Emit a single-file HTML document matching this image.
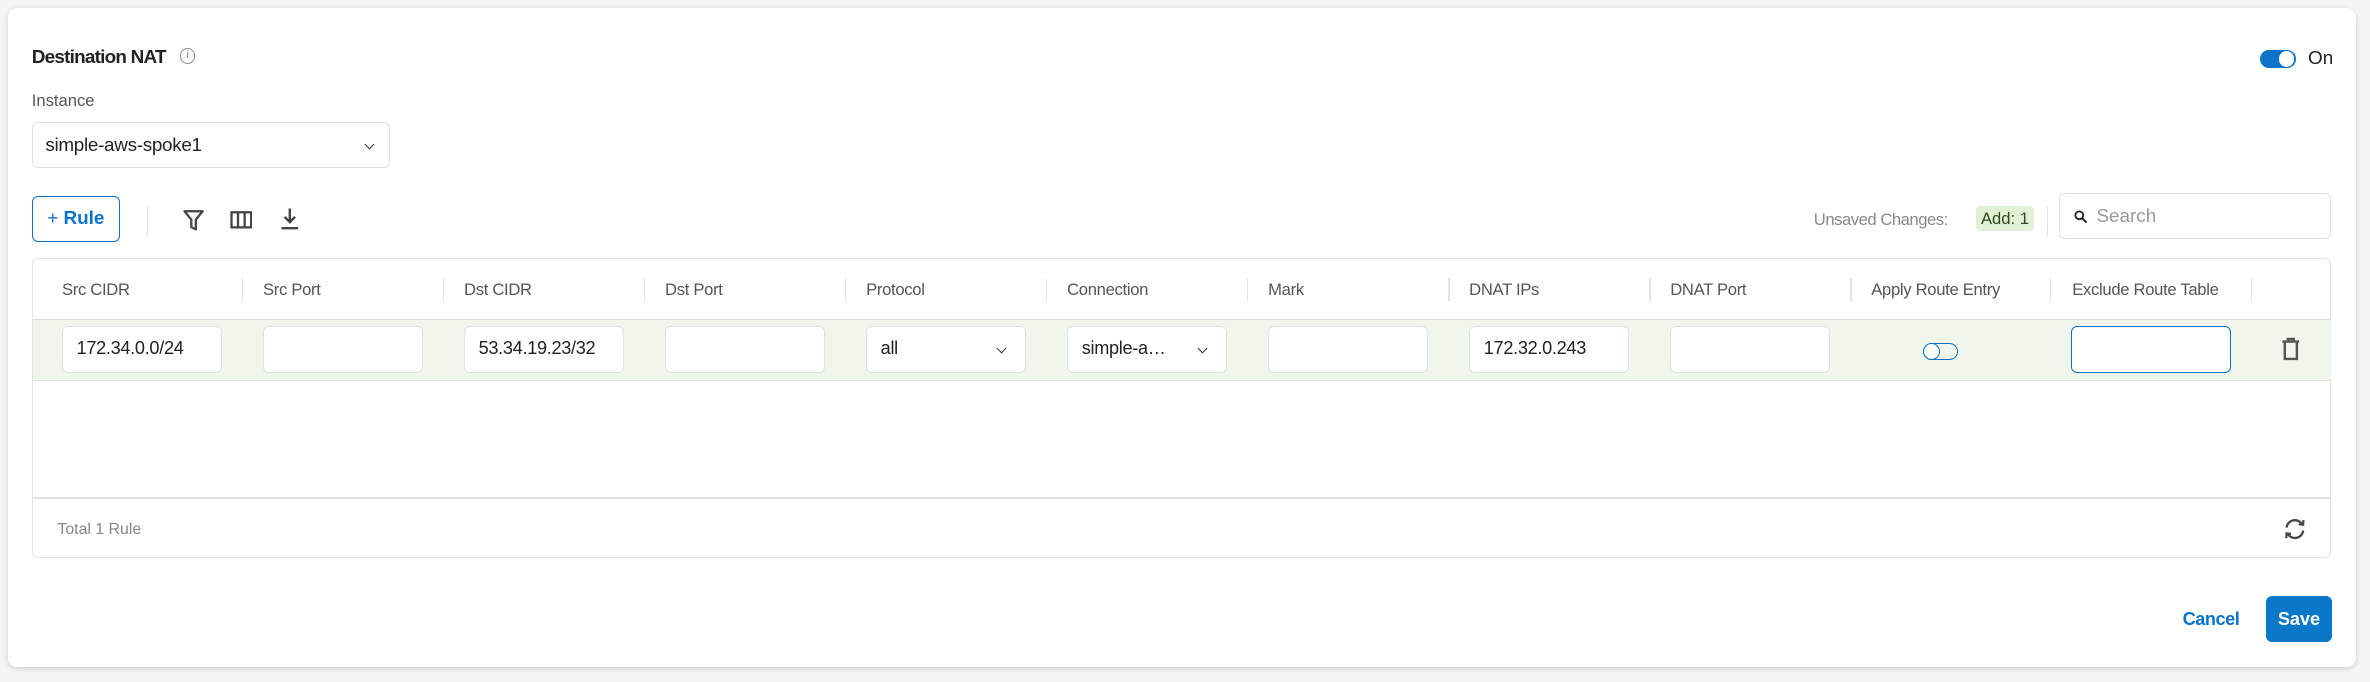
<!DOCTYPE html>
<html><head><meta charset="utf-8"><style>
html,body{margin:0;padding:0;background:#f5f5f5;width:2370px;height:682px;overflow:hidden}
#w{position:absolute;left:0;top:0;width:1568px;height:451px;zoom:1.5115;font-family:"Liberation Sans",sans-serif;color:#222}
.a{position:absolute}
.card{left:5px;top:5px;width:1554px;height:436px;background:#fff;border-radius:6px;box-shadow:0 1px 4px rgba(0,0,0,.15)}
.inp{position:absolute;top:216px;width:106px;height:31px;background:#fff;border:1px solid #e2e2e2;border-radius:4px;font-size:12px;line-height:29px;padding-left:9px;box-sizing:border-box;letter-spacing:-0.2px}
.h{position:absolute;top:185px;font-size:11px;color:#555;letter-spacing:-0.2px}
.sep{position:absolute;top:184px;width:1px;height:15px;background:#e3e3e3}
.chev{position:absolute;width:4px;height:4px;border-right:1.3px solid #333;border-bottom:1.3px solid #333;transform:rotate(45deg)}
</style></head><body><div id="w">
<div class="a card"></div>
<div class="a" style="left:21px;top:31px;font-size:12.5px;font-weight:bold;letter-spacing:-0.5px">Destination NAT</div>
<div class="a" style="left:119px;top:32px;width:9px;height:9px;border:1px solid #888;border-radius:50%;font-size:7px;color:#888;text-align:center;line-height:9px">i</div>
<div class="a" style="left:1495px;top:33px;width:24px;height:12px;background:#0a74c9;border-radius:6px"></div>
<div class="a" style="left:1508px;top:34px;width:10px;height:10px;background:#fff;border-radius:50%"></div>
<div class="a" style="left:1527px;top:32px;font-size:12.5px">On</div>
<div class="a" style="left:21px;top:60px;font-size:11px;color:#555">Instance</div>
<div class="a" style="left:21px;top:81px;width:236px;height:29px;border:1px solid #e0e0e0;border-radius:4px"></div>
<div class="a" style="left:30px;top:89px;font-size:12.5px;letter-spacing:-0.2px">simple-aws-spoke1</div>
<div class="chev" style="left:242px;top:93px"></div>
<div class="a" style="left:21px;top:130px;width:57px;height:29px;border:1px solid #0a74c9;border-radius:4px;color:#0a74c9;font-size:12.5px;font-weight:bold;line-height:29px;text-align:center"><span style="font-weight:normal">+</span> Rule</div>
<div class="a" style="left:97px;top:136px;width:1px;height:20px;background:#e3e3e3"></div>
<svg class="a" style="left:121px;top:138px" width="14" height="15" viewBox="0 0 14 15"><path d="M1 1.5H13L8.5 7V13.5L5.5 12V7Z" fill="none" stroke="#444" stroke-width="1.5" stroke-linejoin="round"/></svg>
<svg class="a" style="left:152px;top:139px" width="15" height="13" viewBox="0 0 15 13"><rect x="1" y="1.5" width="13" height="10" fill="none" stroke="#444" stroke-width="1.5"/><path d="M5.3 1.5V11.5M9.7 1.5V11.5" stroke="#444" stroke-width="1.5"/></svg>
<svg class="a" style="left:185px;top:137px" width="13" height="16" viewBox="0 0 13 16"><path d="M6.5 1V10M3 6.5L6.5 10L10 6.5M1 14H12" fill="none" stroke="#444" stroke-width="1.6"/></svg>
<div class="a" style="left:1200px;top:139px;font-size:11px;color:#888;letter-spacing:-0.3px">Unsaved Changes:</div>
<div class="a" style="left:1307px;top:136px;width:39px;height:17px;background:#e2f1d6;border-radius:3px;font-size:11px;color:#2d4a1e;text-align:center;line-height:17px">Add: 1</div>
<div class="a" style="left:1354px;top:136px;width:1px;height:20px;background:#e3e3e3"></div>
<div class="a" style="left:1362px;top:128px;width:179px;height:29px;border:1px solid #e0e0e0;border-radius:4px"></div>
<svg class="a" style="left:1372px;top:139px" width="9" height="9" viewBox="0 0 9 9"><circle cx="3.5" cy="3.5" r="2.6" fill="none" stroke="#222" stroke-width="1.2"/><path d="M5.5 5.5L8.3 8.3" stroke="#222" stroke-width="1.3"/></svg>
<div class="a" style="left:1387px;top:136px;font-size:12.5px;color:#999">Search</div>
<div class="a" style="left:21px;top:171px;width:1520px;height:197px;border:1px solid #e3e3e3;border-radius:4px"></div>
<div class="a" style="left:22px;top:211px;width:1520px;height:40px;background:#f1f6ec;border-top:1px solid #dcdcdc;border-bottom:1px solid #e3e3e3"></div>
<div class="a" style="left:22px;top:329px;width:1520px;height:1px;background:#e3e3e3"></div>
<div class="h" style="left:41px">Src CIDR</div><div class="sep" style="left:160px"></div>
<div class="h" style="left:174px">Src Port</div><div class="sep" style="left:293px"></div>
<div class="h" style="left:307px">Dst CIDR</div><div class="sep" style="left:426px"></div>
<div class="h" style="left:440px">Dst Port</div><div class="sep" style="left:559px"></div>
<div class="h" style="left:573px">Protocol</div><div class="sep" style="left:692px"></div>
<div class="h" style="left:706px">Connection</div><div class="sep" style="left:825px"></div>
<div class="h" style="left:839px">Mark</div><div class="sep" style="left:958px"></div>
<div class="h" style="left:972px">DNAT IPs</div><div class="sep" style="left:1091px"></div>
<div class="h" style="left:1105px">DNAT Port</div><div class="sep" style="left:1224px"></div>
<div class="h" style="left:1238px">Apply Route Entry</div><div class="sep" style="left:1356px"></div>
<div class="h" style="left:1371px">Exclude Route Table</div><div class="sep" style="left:1489px"></div>
<div class="inp" style="left:41px">172.34.0.0/24</div>
<div class="inp" style="left:174px"></div>
<div class="inp" style="left:307px">53.34.19.23/32</div>
<div class="inp" style="left:440px"></div>
<div class="inp" style="left:573px">all</div><div class="chev" style="left:660px;top:228px"></div>
<div class="inp" style="left:706px">simple-a…</div><div class="chev" style="left:793px;top:228px"></div>
<div class="inp" style="left:839px"></div>
<div class="inp" style="left:972px">172.32.0.243</div>
<div class="inp" style="left:1105px"></div>
<div class="a" style="left:1272px;top:227px;width:22px;height:10px;border:1px solid #0a74c9;border-radius:6px"></div>
<div class="a" style="left:1272px;top:227px;width:10px;height:10px;border:1px solid #0a74c9;border-radius:50%;background:#fff"></div>
<div class="inp" style="left:1370px;border-color:#0a74c9"></div>
<svg class="a" style="left:1509px;top:223px" width="13" height="16" viewBox="0 0 13 16"><path d="M1 3H12M4.5 3V1.3H8.5V3M2.5 3.5V14.5H10.5V3.5" fill="none" stroke="#555" stroke-width="1.6"/></svg>
<div class="a" style="left:38px;top:345px;font-size:10.5px;color:#888">Total 1 Rule</div>
<svg class="a" style="left:1510px;top:342px" width="17" height="16" viewBox="0 0 17 16"><path d="M3 7A5.5 5.5 0 0 1 13 4.5M14 9A5.5 5.5 0 0 1 4 11.5" fill="none" stroke="#444" stroke-width="1.5"/><path d="M11 4.8L14 5.2L14.2 2M6 11.2L3 10.8L2.8 14" fill="none" stroke="#444" stroke-width="1.4"/></svg>
<div class="a" style="left:1444px;top:403px;font-size:12px;font-weight:bold;color:#0a74c9;letter-spacing:-0.3px">Cancel</div>
<div class="a" style="left:1499px;top:394px;width:44px;height:31px;background:#0a78c8;border-radius:4px;color:#fff;font-size:12px;font-weight:bold;text-align:center;line-height:31px">Save</div>
</div></body></html>
